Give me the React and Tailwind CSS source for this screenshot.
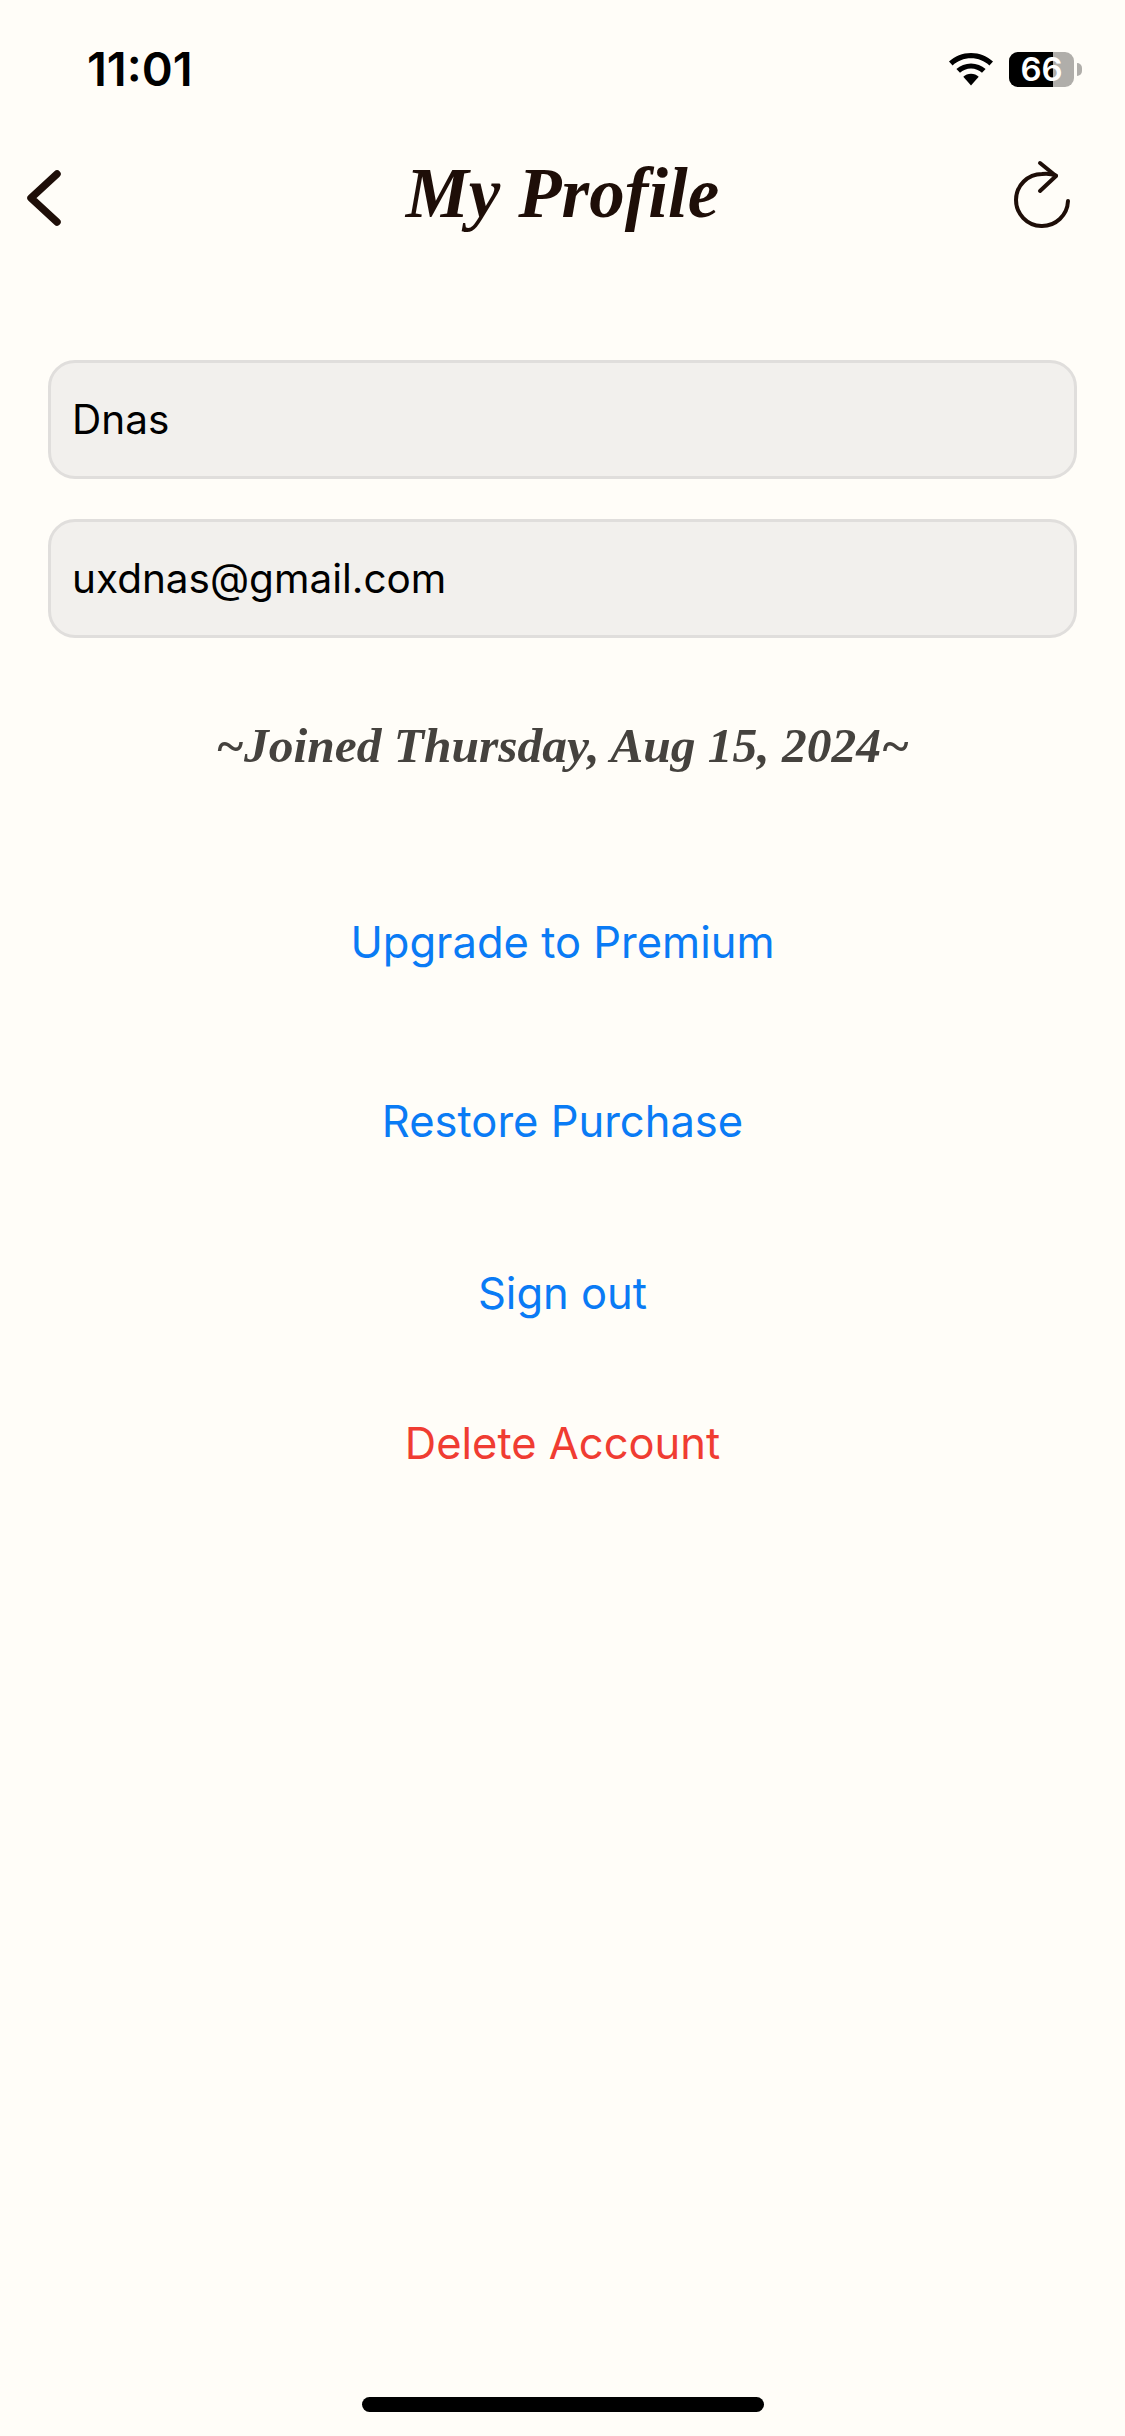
import React from 'react';

const sans = "font-['Inter','Liberation_Sans',sans-serif]";
const serif = "font-['Liberation_Serif','Noto_Serif',serif]";

// --- Status bar icons ---
const WifiIcon = () => (
  <svg width="46" height="33" viewBox="0 0 46 33" className="block">
    <path d="M23 0C14.5 0 6.8 3.2 1 8.6l3.6 3.8C9.400 7.900 15.900 5.200 23 5.200s13.600 2.700 18.400 7.200L45 8.600C39.200 3.200 31.500 0 23 0z" fill="#000" />
    <path d="M23 10.400c-5.600 0-10.700 2.100-14.600 5.600l3.600 3.800c2.900-2.600 6.800-4.200 11-4.200s8.100 1.600 11 4.200l3.600-3.800c-3.900-3.500-9-5.600-14.600-5.600z" fill="#000" />
    <path d="M23 20.800c-3 0-5.700 1.100-7.700 3L23 32.500l7.700-8.700c-2-1.900-4.700-3-7.700-3z" fill="#000" />
  </svg>
);

const Battery = () => (
  <div className="flex items-center gap-[3px]">
    <div className="relative flex w-[65px] h-[35px] rounded-[9px] bg-[#b0aeaa]">
      <div className="w-[44px] h-full rounded-l-[9px] bg-black" />
      <span className={`absolute inset-0 flex items-center justify-center text-white text-[33px] leading-none font-semibold ${sans}`}>66</span>
    </div>
    <div className="w-[5px] h-[13px] rounded-r-full bg-[#b0aeaa]" />
  </div>
);

const BackIcon = () => (
  <svg width="38" height="62" viewBox="0 0 38 62" className="block">
    <path d="M31 10 L5 34 L31 58" fill="none" stroke="#1e0e08" strokeWidth="7.500" strokeLinecap="round" strokeLinejoin="round" />
  </svg>
);

const RefreshIcon = () => (
  <svg width="60" height="72" viewBox="0 0 60 72" className="block">
    <path d="M44 16.500 A 28 28 0 0 0 30 15 A 26 26 0 1 0 56 42" fill="none" stroke="#1e0e08" strokeWidth="4" strokeLinecap="round" />
    <path d="M28 4 L44 17 L28 32" fill="none" stroke="#1e0e08" strokeWidth="4" strokeLinecap="round" strokeLinejoin="round" />
  </svg>
);

const Field = ({ value }) => (
  <div className={`flex items-center h-[119px] px-[21px] pt-[2px] bg-[#f2f0ed] border-[3px] border-[#e0dedc] rounded-[27px] text-[40.500px] text-black ${sans}`}>
    {value}
  </div>
);

const actions = [
  { label: 'Upgrade to Premium', color: 'text-[#0a7bf5]', cls: 'mt-[145px]' },
  { label: 'Restore Purchase', color: 'text-[#0a7bf5]', cls: 'mt-[127px]' },
  { label: 'Sign out', color: 'text-[#0a7bf5]', cls: 'mt-[120px]' },
  { label: 'Delete Account', color: 'text-[#f03c32]', cls: 'mt-[98px]' },
];

export default function App() {
  return (
    <div className="flex flex-col w-[1125px] h-[2436px] overflow-hidden bg-[#fffdf8]">
      {/* status bar */}
      <div className="flex items-center justify-between h-[68px] mt-[34px] mb-[1px] pl-[87px] pr-[43px]">
        <span className={`text-[47px] leading-none font-semibold text-black ${sans}`}>11:01</span>
        <div className="flex items-center gap-[15px] mt-[2px]">
          <WifiIcon />
          <Battery />
        </div>
      </div>

      {/* header */}
      <div className="grid grid-cols-[1fr_auto_1fr] items-center h-[92px] mt-[46px] px-[26px]">
        <BackIcon />
        <h1 className={`pb-[3px] text-[71px] leading-none font-bold italic text-[#1e0e08] ${serif}`}>My Profile</h1>
        <div className="justify-self-end mr-[27px]">
          <RefreshIcon />
        </div>
      </div>

      {/* fields */}
      <div className="flex flex-col gap-[40px] mt-[119px] mx-[48px]">
        <Field value="Dnas" />
        <Field value="uxdnas@gmail.com" />
      </div>

      <p className={`mt-[83px] text-center text-[49.500px] leading-none font-bold italic text-[#45423e] ${serif}`}>
        ~Joined Thursday, Aug 15, 2024~
      </p>

      {/* actions */}
      <div className="flex flex-col items-center">
        {actions.map((a) => (
          <button key={a.label} className={`${a.cls} ${a.color} text-[43.500px] leading-[52px] ${sans}`}>
            {a.label}
          </button>
        ))}
      </div>

      {/* home indicator */}
      <div className="mt-auto mb-[24px] mx-auto w-[402px] h-[15px] rounded-full bg-black" />
    </div>
  );
}
